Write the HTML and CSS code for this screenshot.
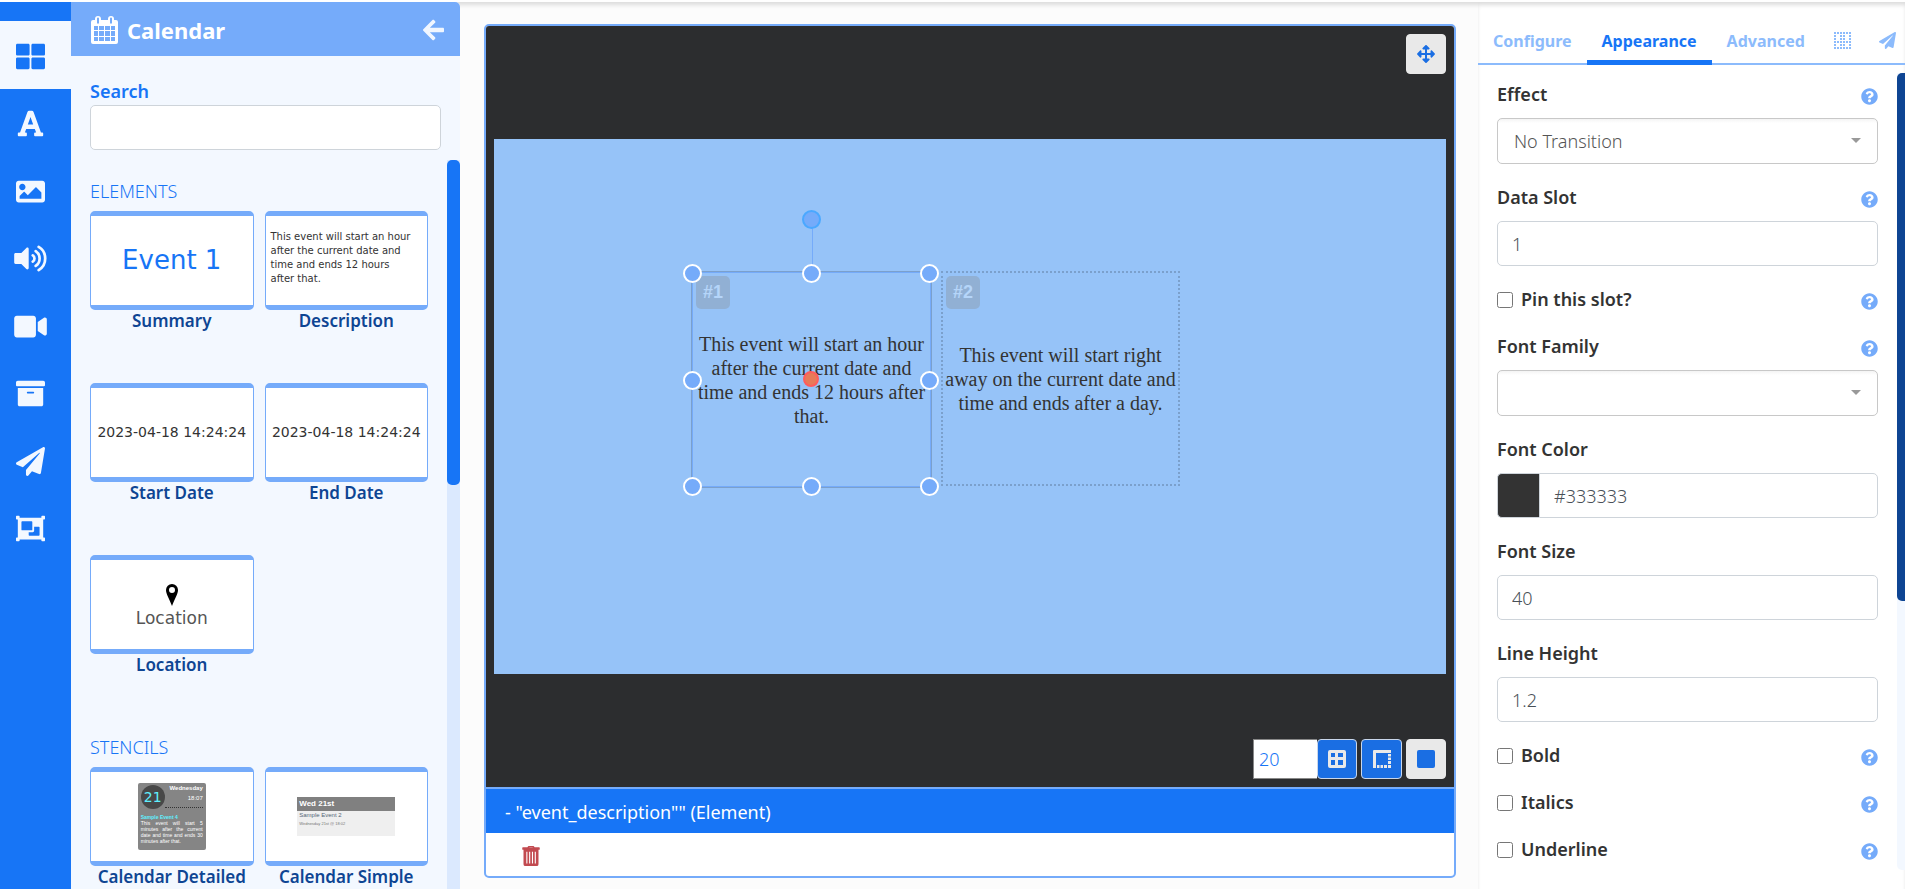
FILE: index.html
```html
<!DOCTYPE html>
<html lang="en">
<head>
<meta charset="utf-8">
<title>Layout Editor</title>
<link rel="stylesheet" href="styles.css">
</head>
<body>
<svg class="defs" aria-hidden="true">
  <symbol id="i-plane" viewBox="0 0 512 512"><path d="M476 3.200L12.500 270.600c-18.100 10.400-15.800 35.600 2.200 43.200L121 358.400l287.300-253.200c5.500-4.900 13.300 2.600 8.600 8.300L176 407v80.500c0 23.600 28.500 32.900 42.500 15.800L282 426l124.600 52.200c14.200 6 30.400-2.900 33-18.200l72-432C515 7.800 493.300-6.800 476 3.200z"/></symbol>
  <symbol id="i-help" viewBox="0 0 512 512"><path d="M504 256c0 137-111 248-248 248S8 393 8 256C8 119.100 119 8 256 8s248 111.100 248 248zM262.700 90c-54.500 0-89.300 23-116.500 63.800-3.500 5.300-2.400 12.400 2.700 16.300l34.700 26.300c5.200 3.900 12.600 3 16.700-2.100 17.900-22.700 30.100-35.800 57.300-35.800 20.400 0 45.700 13.100 45.700 33 0 15-12.400 22.700-32.500 34C247.100 238.500 216 254.900 216 296v4c0 6.600 5.400 12 12 12h56c6.600 0 12-5.400 12-12v-1.300c0-28.500 83.200-29.600 83.200-106.700 0-58-60.200-102-116.500-102zM256 338c-25.400 0-46 20.600-46 46s20.600 46 46 46 46-20.600 46-46-20.600-46-46-46z"/></symbol>
  <symbol id="i-grid4" viewBox="0 0 512 512"><path d="M296 32h192c13.300 0 24 10.700 24 24v160c0 13.300-10.700 24-24 24H296c-13.300 0-24-10.700-24-24V56c0-13.300 10.700-24 24-24zm-80 0H24C10.700 32 0 42.700 0 56v160c0 13.300 10.700 24 24 24h192c13.300 0 24-10.700 24-24V56c0-13.300-10.700-24-24-24zM0 296v160c0 13.300 10.700 24 24 24h192c13.300 0 24-10.700 24-24V296c0-13.300-10.700-24-24-24H24c-13.300 0-24 10.700-24 24zm296 184h192c13.300 0 24-10.700 24-24V296c0-13.300-10.700-24-24-24H296c-13.300 0-24 10.700-24 24v160c0 13.300 10.700 24 24 24z"/></symbol>
  <symbol id="i-font" viewBox="0 0 448 512"><path d="M432 416h-23.400L277.800 53.700A32 32 0 0 0 247.600 32h-47.200a32 32 0 0 0-30.200 21.700L39.400 416H16a16 16 0 0 0-16 16v32a16 16 0 0 0 16 16h128a16 16 0 0 0 16-16v-32a16 16 0 0 0-16-16h-19.600l23.300-64h152.600l23.300 64H304a16 16 0 0 0-16 16v32a16 16 0 0 0 16 16h128a16 16 0 0 0 16-16v-32a16 16 0 0 0-16-16zM176.800 272L224 142.500 271.200 272z"/></symbol>
  <symbol id="i-image" viewBox="0 0 512 512"><path d="M464 448H48c-26.500 0-48-21.500-48-48V112c0-26.500 21.500-48 48-48h416c26.500 0 48 21.500 48 48v288c0 26.500-21.500 48-48 48zM112 120c-30.900 0-56 25.100-56 56s25.100 56 56 56 56-25.100 56-56-25.100-56-56-56zM64 384h384V272l-87.500-87.500c-4.700-4.700-12.300-4.700-17 0L208 320l-55.500-55.500c-4.700-4.700-12.300-4.700-17 0L64 336v48z"/></symbol>
  <symbol id="i-audio" viewBox="0 0 576 512"><path d="M215 71.100L126.100 160H24c-13.300 0-24 10.700-24 24v144c0 13.300 10.700 24 24 24h102.100L215 441c15 15 41 4.500 41-17V88c0-21.500-26-32-41-17z"/><g fill="none" stroke="currentColor" stroke-width="48" stroke-linecap="round"><path d="M328 200c40 22 40 90 0 112M380 125c92 60 92 202 0 262M432 52c154 90 154 318 0 408"/></g></symbol>
  <symbol id="i-video" viewBox="0 0 576 512"><path d="M336.200 64H47.800C21.400 64 0 85.400 0 111.800v288.400C0 426.600 21.400 448 47.800 448h288.400c26.400 0 47.800-21.400 47.800-47.800V111.800c0-26.400-21.400-47.800-47.800-47.800zm189.400 37.700L416 177.300v157.400l109.600 75.500c21.200 14.600 50.400-.3 50.400-25.800V127.500c0-25.400-29.100-40.400-50.400-25.800z"/></symbol>
  <symbol id="i-archive" viewBox="0 0 512 512"><path d="M32 448c0 17.700 14.300 32 32 32h384c17.700 0 32-14.300 32-32V160H32v288zm160-212c0-6.600 5.400-12 12-12h104c6.600 0 12 5.400 12 12v8c0 6.600-5.400 12-12 12H204c-6.600 0-12-5.400-12-12v-8zM480 32H32C14.300 32 0 46.300 0 64v48c0 8.800 7.200 16 16 16h480c8.800 0 16-7.200 16-16V64c0-17.700-14.300-32-32-32z"/></symbol>
  <symbol id="i-group" viewBox="0 0 512 512"><path d="M480 128V96h20c6.600 0 12-5.400 12-12V44c0-6.600-5.400-12-12-12h-40c-6.600 0-12 5.400-12 12v20H64V44c0-6.600-5.400-12-12-12H12C5.400 32 0 37.400 0 44v40c0 6.600 5.400 12 12 12h20v320H12c-6.600 0-12 5.400-12 12v40c0 6.600 5.400 12 12 12h40c6.600 0 12-5.400 12-12v-20h384v20c0 6.600 5.400 12 12 12h40c6.600 0 12-5.400 12-12v-40c0-6.600-5.400-12-12-12h-20V128zM96 276V140c0-6.600 5.400-12 12-12h168c6.600 0 12 5.400 12 12v136c0 6.600-5.400 12-12 12H108c-6.600 0-12-5.400-12-12zm320 96c0 6.600-5.400 12-12 12H236c-6.600 0-12-5.400-12-12v-52h72c13.300 0 24-10.700 24-24v-72h84c6.600 0 12 5.400 12 12v136z"/></symbol>
  <symbol id="i-calendar" viewBox="0 0 27 28"><path fill-rule="evenodd" d="M2 4h2V3a3 3 0 0 1 6 0v1h7V3a3 3 0 0 1 6 0v1h2a2 2 0 0 1 2 2v20a2 2 0 0 1-2 2H2a2 2 0 0 1-2-2V6a2 2 0 0 1 2-2zM6 2.500v5h2v-5a1 1 0 0 0-2 0zM19 2.500v5h2v-5a1 1 0 0 0-2 0zM3 10v4h4v-4zm5 0v4h5v-4zm6 0v4h5v-4zm6 0v4h4v-4zM3 15v5h4v-5zm5 0v5h5v-5zm6 0v5h5v-5zm6 0v5h4v-5zM3 21v4h4v-4zm5 0v4h5v-4zm6 0v4h5v-4zm6 0v4h4v-4z"/></symbol>
  <symbol id="i-back" viewBox="0 0 448 512"><path d="M257.500 445.100l-22.200 22.200c-9.400 9.400-24.600 9.400-33.900 0L7 273c-9.400-9.400-9.400-24.600 0-33.900L201.400 44.700c9.400-9.400 24.600-9.400 33.900 0l22.200 22.200c9.500 9.500 9.300 25-.4 34.300L146.600 206H424c13.300 0 24 10.700 24 24v52c0 13.300-10.700 24-24 24H146.600l110.500 104.800c9.800 9.300 10 24.800.4 34.300z"/></symbol>
  <symbol id="i-move" viewBox="0 0 512 512"><path d="M352.200 425.800l-79.200 79.200c-9.400 9.400-24.600 9.400-33.900 0l-79.200-79.200c-15.100-15.100-4.400-41 17-41h51.200L228 284H127.200v51.200c0 21.400-25.900 32.100-41 17L7 272.900c-9.400-9.400-9.400-24.600 0-33.900L86.200 159.800c15.100-15.100 41-4.400 41 17V228H228V127.200h-51.200c-21.400 0-32.100-25.900-17-41L239 7c9.400-9.400 24.600-9.400 33.900 0l79.200 79.200c15.100 15.100 4.400 41-17 41H284V228h100.800v-51.200c0-21.400 25.900-32.100 41-17L505 239c9.400 9.400 9.400 24.600 0 33.900l-79.200 79.200c-15.100 15.100-41 4.400-41-17V284H284v100.800h51.200c21.400 0 32.100 25.900 17 41z"/></symbol>
  <symbol id="i-trash" viewBox="0 0 448 512"><path fill-rule="evenodd" d="M132 32l18-25q6-7 14-7h120q8 0 14 7l18 25h116a16 16 0 0 1 16 16v32a16 16 0 0 1-16 16h-16v368a48 48 0 0 1-48 48H80a48 48 0 0 1-48-48V96H16A16 16 0 0 1 0 80V48a16 16 0 0 1 16-16zm44 0h96l-8-8h-80zM104 144v304h28V144zm72 0v304h28V144zm72 0v304h28V144zm72 0v304h28V144z"/></symbol>
</svg>

<div class="editor">
  <nav class="rail" aria-label="Toolbox">
    <button class="rail-btn rail-btn-active" aria-label="Widgets"><svg class="ico-rail"><use href="#i-grid4"/></svg></button>
    <button class="rail-btn" aria-label="Text"><svg class="ico-rail"><use href="#i-font"/></svg></button>
    <button class="rail-btn" aria-label="Images"><svg class="ico-rail"><use href="#i-image"/></svg></button>
    <button class="rail-btn" aria-label="Audio"><svg class="ico-rail"><use href="#i-audio"/></svg></button>
    <button class="rail-btn" aria-label="Video"><svg class="ico-rail"><use href="#i-video"/></svg></button>
    <button class="rail-btn" aria-label="Library"><svg class="ico-rail"><use href="#i-archive"/></svg></button>
    <button class="rail-btn" aria-label="Share"><svg class="ico-rail"><use href="#i-plane"/></svg></button>
    <button class="rail-btn" aria-label="Groups"><svg class="ico-rail"><use href="#i-group"/></svg></button>
  </nav>

  <aside class="library">
    <header class="library-head">
      <svg class="ico-cal"><use href="#i-calendar"/></svg>
      <h1 class="library-title">Calendar</h1>
      <button class="back" aria-label="Back"><svg class="ico-back"><use href="#i-back"/></svg></button>
    </header>
    <div class="search">
      <label class="search-label" for="search">Search</label>
      <input class="search-input" id="search" type="text">
    </div>
    <div class="library-body">
      <div class="library-list">
        <h2 class="group-title">Elements</h2>
        <div class="cards">
          <figure class="card"><div class="thumb thumb-event">Event 1</div><figcaption class="card-name">Summary</figcaption></figure>
          <figure class="card"><div class="thumb thumb-desc">This event will start an hour after the current date and time and ends 12 hours after that.</div><figcaption class="card-name">Description</figcaption></figure>
          <figure class="card"><div class="thumb thumb-date">2023-04-18 14:24:24</div><figcaption class="card-name">Start Date</figcaption></figure>
          <figure class="card"><div class="thumb thumb-date">2023-04-18 14:24:24</div><figcaption class="card-name">End Date</figcaption></figure>
          <figure class="card"><div class="thumb thumb-loc"><svg class="ico-pin" viewBox="0 0 12 22"><path fill-rule="evenodd" d="M6 0a6 6 0 0 1 6 6c0 4-3 8-6 16C3 14 0 10 0 6a6 6 0 0 1 6-6zm0 3a3 3 0 1 0 0 6 3 3 0 0 0 0-6z"/></svg>Location</div><figcaption class="card-name">Location</figcaption></figure>
        </div>
        <h2 class="group-title">Stencils</h2>
        <div class="cards">
          <figure class="card">
            <div class="thumb">
              <div class="detailed">
                <div class="detailed-top"><span class="detailed-day">21</span><div class="detailed-when"><b>Wednesday</b><span>18:07</span></div></div>
                <div class="detailed-name">Sample Event 4</div>
                <p class="detailed-text">This event will start 5 minutes after the current date and time and ends 30 minutes after that.</p>
              </div>
            </div>
            <figcaption class="card-name">Calendar Detailed</figcaption>
          </figure>
          <figure class="card">
            <div class="thumb">
              <div class="simple">
                <div class="simple-head">Wed 21st</div>
                <div class="simple-name">Sample Event 2</div>
                <div class="simple-when">Wednesday 21st @ 18:02</div>
              </div>
            </div>
            <figcaption class="card-name">Calendar Simple</figcaption>
          </figure>
        </div>
      </div>
      <div class="track"><div class="track-thumb"></div></div>
    </div>
  </aside>

  <main class="stage">
    <section class="viewer">
      <div class="viewer-tools viewer-tools-top">
        <button class="tool" aria-label="Move"><svg class="ico-tool"><use href="#i-move"/></svg></button>
      </div>
      <div class="canvas">
        <div class="slot slot-one">
          <span class="slot-tag">#1</span>
          <p class="slot-text">This event will start an hour after the current date and time and ends 12 hours after that.</p>
        </div>
        <div class="slot slot-two">
          <span class="slot-tag">#2</span>
          <p class="slot-text">This event will start right away on the current date and time and ends after a day.</p>
        </div>
        <div class="selection">
          <i class="rotate-line"></i><i class="handle rotate"></i>
          <i class="handle nw"></i><i class="handle n"></i><i class="handle ne"></i>
          <i class="handle w"></i><i class="handle e"></i>
          <i class="handle sw"></i><i class="handle s"></i><i class="handle se"></i>
          <i class="origin"></i>
        </div>
      </div>
      <div class="viewer-tools viewer-tools-bottom">
        <div class="snap">
          <input class="snap-input" type="text" value="20" aria-label="Grid size">
          <button class="tool tool-on tool-joined" aria-label="Snap to grid"><svg class="ico-tool" viewBox="0 0 18 18"><path fill-rule="evenodd" d="M2 0h14a2 2 0 0 1 2 2v14a2 2 0 0 1-2 2H2a2 2 0 0 1-2-2V2a2 2 0 0 1 2-2zm1 3v4h4V3zm7 0v4h5V3zM3 10v5h4v-5zm7 0v5h5v-5z"/></svg></button>
        </div>
        <button class="tool tool-on" aria-label="Snap to borders"><svg class="ico-tool" viewBox="0 0 18 18"><path d="M0 18V1q0-1 1-1h17v3H3v15zM4 15h2.500v3H4zM7.500 15H10v3H7.500zM11 15h3v3h-3zM15 15h3v3h-3zM15 4h3v2.500h-3zM15 7.500h3V10h-3zM15 11h3v3h-3z"/></svg></button>
        <button class="tool" aria-label="Snap to elements"><svg class="ico-tool" viewBox="0 0 18 18"><rect width="18" height="18" rx="2"/></svg></button>
      </div>
    </section>
    <div class="crumb">- "event_description"" (Element)</div>
    <div class="actions"><button class="delete" aria-label="Delete"><svg class="ico-trash"><use href="#i-trash"/></svg></button></div>
  </main>

  <aside class="props">
    <nav class="tabs">
      <a class="tab" href="#configure">Configure</a>
      <a class="tab tab-active" href="#appearance">Appearance</a>
      <a class="tab" href="#advanced">Advanced</a>
      <a class="tab tab-icon" href="#position" aria-label="Position"><svg class="ico-tab" viewBox="0 0 17 17"><g fill="none" stroke="currentColor" stroke-width="2" stroke-dasharray="2 1"><path d="M0 1h17M0 16h17M1 3v12M16 3v12M3 10h12M7 3v6M7 12v3M10 3v6M10 12v3"/></g></svg></a>
      <a class="tab tab-icon" href="#actions" aria-label="Actions"><svg class="ico-tab"><use href="#i-plane"/></svg></a>
    </nav>
    <div class="props-body">
      <form class="form">
        <div class="field"><div class="field-head"><label for="effect">Effect</label><svg class="ico-help"><use href="#i-help"/></svg></div>
          <div class="select-wrap"><select class="control select" id="effect"><option>No Transition</option></select></div></div>
        <div class="field"><div class="field-head"><label for="slot">Data Slot</label><svg class="ico-help"><use href="#i-help"/></svg></div>
          <input class="control" id="slot" type="text" value="1"></div>
        <div class="field check"><input class="box" id="pin" type="checkbox"><label for="pin">Pin this slot?</label><svg class="ico-help"><use href="#i-help"/></svg></div>
        <div class="field"><div class="field-head"><label for="family">Font Family</label><svg class="ico-help"><use href="#i-help"/></svg></div>
          <div class="select-wrap"><select class="control select" id="family"><option></option></select></div></div>
        <div class="field"><div class="field-head"><label for="color">Font Color</label></div>
          <div class="color"><span class="swatch"></span><input class="control color-input" id="color" type="text" value="#333333"></div></div>
        <div class="field"><div class="field-head"><label for="size">Font Size</label></div>
          <input class="control" id="size" type="text" value="40"></div>
        <div class="field"><div class="field-head"><label for="leading">Line Height</label></div>
          <input class="control" id="leading" type="text" value="1.2"></div>
        <div class="field check"><input class="box" id="bold" type="checkbox"><label for="bold">Bold</label><svg class="ico-help"><use href="#i-help"/></svg></div>
        <div class="field check"><input class="box" id="italics" type="checkbox"><label for="italics">Italics</label><svg class="ico-help"><use href="#i-help"/></svg></div>
        <div class="field check"><input class="box" id="underline" type="checkbox"><label for="underline">Underline</label><svg class="ico-help"><use href="#i-help"/></svg></div>
      </form>
      <div class="props-track"><div class="props-thumb"></div></div>
    </div>
  </aside>
</div>
</body>
</html>
```
FILE: styles.css
```css
:root {
  --blue: #1775f6;
  --mid: #75abfa;
  --soft: #8cbbfc;
  --pale: #f3f8ff;
  --navy: #0e4593;
}
* { box-sizing: border-box; }
body {
  margin: 0;
  font: 18px/27px "Noto Sans", "Open Sans", sans-serif;
  color: #333;
  background: #fcfcfc;
}
h1, h2, p, figure { margin: 0; }
button { padding: 0; border: 0; background: none; cursor: pointer; }
svg { display: block; flex: none; fill: currentColor; }
.defs { position: absolute; width: 0; height: 0; }

.editor {
  display: grid;
  grid-template-columns: 71px 389px minmax(0, 1fr) 427px;
  height: 100vh;
  border-top: 2px solid #fff;
  box-shadow: inset 0 4px 4px -1px #dcdcdc;
  overflow: hidden;
}

.rail {
  display: grid;
  grid-template-rows: repeat(8, minmax(0, 1fr));
  padding: 19px 0 328px;
  background: var(--blue);
}
.rail-btn {
  display: flex;
  align-items: center;
  padding-left: 14px;
  padding-top: 3px;
  color: var(--pale);
}
.rail-btn-active { background: var(--pale); color: var(--blue); }
.ico-rail { width: 33px; height: 29px; }

.library {
  display: flex;
  flex-direction: column;
  min-height: 0;
  background: var(--pale);
  border-top-right-radius: 5px;
  overflow: hidden;
}
.library-head {
  display: flex;
  align-items: center;
  gap: 9px;
  flex: none;
  height: 54px;
  padding: 1px 16px 0 20px;
  background: var(--mid);
  color: #fff;
}
.library-title { flex: 1; font-size: 22px; line-height: 34px; font-weight: 700; }
.ico-cal { width: 27px; height: 28px; }
.back { color: #f0f6ff; }
.ico-back { width: 21px; height: 24px; }
.search { padding: 22px 19px 10px; }
.search-label { display: block; font-weight: 600; color: var(--blue); }
.search-input {
  display: block;
  width: 100%;
  height: 45px;
  border: 1px solid #ced4da;
  border-radius: 5px;
  background: #fff;
}
.library-body { flex: 1; display: flex; min-height: 0; }
.library-list { flex: 1; padding: 18px 19px 0 19px; overflow: hidden; }
.group-title {
  margin-bottom: 6px;
  font-size: 18px;
  line-height: 27px;
  font-weight: 300;
  text-transform: uppercase;
  color: var(--blue);
}
.cards { display: grid; grid-template-columns: 1fr 1fr; gap: 48px 11px; margin-bottom: 55px; }
.card { min-width: 0; }
.thumb {
  display: flex;
  align-items: center;
  justify-content: center;
  height: 99px;
  border: solid var(--mid);
  border-width: 5px 1px;
  border-radius: 5px;
  background: #fff;
  font-family: "DejaVu Sans", sans-serif;
}
.thumb-event { font-size: 26px; color: var(--blue); }
.thumb-desc { padding: 0 12px 6px 5px; font-size: 10px; line-height: 14px; }
.thumb-date { font-size: 14px; }
.thumb-loc { flex-direction: column; font-size: 17px; line-height: 24px; padding-top: 4px; color: #555; }
.ico-pin { width: 12px; height: 22px; color: #000; }
.card-name { line-height: 27px; margin-top: -3px; padding-bottom: 1px; text-align: center; font-size: 17px; font-weight: 600; color: var(--navy); white-space: nowrap; }
.track { width: 13px; background: #dbe9fe; }
.track-thumb { height: 325px; border-radius: 5px; background: var(--blue); }

.detailed {
  width: 68px;
  height: 67px;
  padding: 2px 3px;
  border-radius: 2px;
  background: #858585;
  color: #fff;
  font: 5px/6px "Liberation Sans", sans-serif;
}
.detailed-top { display: flex; justify-content: space-between; }
.detailed-day {
  width: 24px;
  height: 24px;
  border-radius: 50%;
  background: #484848;
  color: #5ff0ff;
  font: 14px/25px "DejaVu Sans", sans-serif;
  text-align: center;
}
.detailed-when {
  display: flex;
  flex-direction: column;
  flex: 1;
  gap: 4px;
  height: 23px;
  border-bottom: 1px dotted #333;
  text-align: right;
  font-size: 6px;
}
.detailed-name { margin-top: 5px; color: #5ff0ff; font-weight: bold; white-space: nowrap; }
.detailed-text { text-align: justify; }
.simple {
  width: 98px;
  height: 39px;
  background: #efefef;
  color: #777;
  font: 4px/8px "Liberation Sans", sans-serif;
}
.simple-head { padding: 0 2px; background: #808080; color: #fff; font-size: 8px; line-height: 14px; font-weight: bold; }
.simple-name { padding: 0 2px; font-size: 6px; line-height: 9px; color: #567; }
.simple-when { padding: 0 2px; }

.stage {
  display: flex;
  flex-direction: column;
  margin: 22px 22px 11px 24px;
  border: 2px solid var(--mid);
  border-radius: 5px;
  background: #fff;
  overflow: hidden;
}
.viewer {
  position: relative;
  flex: 1;
  display: flex;
  align-items: center;
  padding: 0 8px;
  background: #2c2d2f;
  border-bottom: 2px solid var(--mid);
}
.canvas { position: relative; flex: 1; aspect-ratio: 952 / 535; background: #96c3f8; }
.viewer-tools { position: absolute; right: 8px; display: flex; gap: 4px; }
.viewer-tools-top { top: 8px; }
.viewer-tools-bottom { bottom: 8px; }
.tool {
  display: flex;
  align-items: center;
  justify-content: center;
  width: 40px;
  height: 40px;
  border: 1px solid #e9e9e9;
  border-radius: 4px;
  background: #e9e9e9;
  color: #1a6ee3;
}
.tool-on { width: 41px; background: #1a6ee3; border-color: #c9d6ea; color: #e9e9e9; }
.tool-joined { width: 40px; }
.ico-tool { width: 18px; height: 18px; }
.snap { display: flex; }
.snap-input {
  width: 64px;
  height: 40px;
  padding: 0 5px;
  border: 1px solid #888;
  border-width: 1px 0 1px 1px;
  background: #fff;
  font: 18px "Noto Sans", sans-serif;
  font-weight: 300;
  color: var(--blue);
}

.slot {
  position: absolute;
  display: flex;
  align-items: center;
  border: 2px dotted #7ba0cc;
  font: 20px/24px "Liberation Serif", serif;
  text-align: center;
}
.slot-one { left: 197px; top: 132px; width: 241px; height: 217px; border-style: solid; }
.slot-two { left: 447px; top: 132px; width: 239px; height: 215px; }
.slot-tag {
  position: absolute;
  left: 3px;
  top: 3px;
  padding: 0 7px;
  border-radius: 5px;
  background: #91b0d4;
  color: #b5d5f9;
  font: bold 18px/33px "Liberation Sans", sans-serif;
}
.slot-text { flex: 1; }
.selection { position: absolute; left: 198px; top: 133px; width: 239px; height: 215px; border: 1px solid var(--mid); }
.handle {
  position: absolute;
  width: 19px;
  height: 19px;
  margin: -9px -10px;
  border: 2px solid #fff;
  border-radius: 50%;
  background: var(--mid);
}
.nw { left: 0; top: 0; }
.n { left: 50%; top: 0; }
.ne { left: 100%; top: 0; }
.w { left: 0; top: 50%; }
.e { left: 100%; top: 50%; }
.sw { left: 0; top: 100%; }
.s { left: 50%; top: 100%; }
.se { left: 100%; top: 100%; }
.rotate { left: 50%; top: -54px; border-color: #4aa8ff; }
.rotate-line { position: absolute; left: 50%; top: -54px; width: 1px; height: 54px; background: var(--mid); }
.origin {
  position: absolute;
  left: 50%;
  top: 50%;
  width: 16px;
  height: 16px;
  margin: -9px;
  border: 2px solid #ff5c5c;
  border-radius: 50%;
  background: #e87a58;
}
.crumb { padding: 10px 19px 7px; background: var(--blue); color: #fff; }
.actions { display: flex; height: 43px; padding: 2px 36px 0; align-items: center; }
.delete { color: #c24a50; }
.ico-trash { width: 18px; height: 20px; }

.props {
  display: flex;
  flex-direction: column;
  min-width: 0;
  min-height: 0;
  background: #fff;
  box-shadow: inset 0 4px 4px -1px #dcdcdc;
  overflow: hidden;
}
.tabs { display: flex; flex: none; height: 63px; padding-top: 18px; border-bottom: 2px solid var(--soft); }
.tab {
  display: flex;
  flex: none;
  justify-content: center;
  height: 45px;
  padding: 9px 15px 0;
  font-size: 16px;
  line-height: 24px;
  font-weight: 700;
  color: var(--soft);
  text-decoration: none;
}
.tab-active { color: var(--blue); border-bottom: 5px solid var(--blue); }
.tab-icon { padding: 9px 14px 0; }
.ico-tab { width: 17px; height: 23px; }
.props-body { flex: 1; display: flex; min-height: 0; padding: 8px 0 19px; }
.form { flex: 1; min-width: 0; padding: 8px 19px 0; overflow: hidden; }
.field { margin-bottom: 20px; font-weight: 600; }
.field-head { display: flex; justify-content: space-between; align-items: center; height: 27px; margin-bottom: 10px; }
.ico-help { width: 17px; height: 17px; margin-top: 4px; color: var(--mid); }
.control {
  display: block;
  width: 100%;
  height: 45px;
  padding: 0 14px;
  border: 1px solid #ced4da;
  border-radius: 5px;
  background: #fff;
  font: 300 18px "Noto Sans", sans-serif;
  color: #495057;
}
.select-wrap { position: relative; }
.select-wrap::after {
  content: "";
  position: absolute;
  right: 17px;
  top: 20px;
  border: solid transparent;
  border-width: 5px 5px 0;
  border-top-color: #999;
  pointer-events: none;
}
.select {
  appearance: none;
  height: 46px;
  padding: 0 16px;
  border-color: #c8c8c8;
  background: linear-gradient(#f4f4f4, #fff 4px);
  color: #555;
}
.check { display: flex; align-items: center; gap: 8px; height: 27px; }
.check .ico-help { margin-left: auto; }
.box { width: 16px; height: 16px; margin: 0; }
.color { display: flex; }
.swatch { width: 42px; background: #333; border: 1px solid #ced4da; border-right: 0; border-radius: 5px 0 0 5px; }
.color-input { flex: 1; width: auto; border-radius: 0 5px 5px 0; }
.props-track { width: 8px; background: var(--pale); border-bottom-left-radius: 5px; }
.props-thumb { height: 528px; background: var(--navy); border-radius: 5px 0 0 5px; }
```
